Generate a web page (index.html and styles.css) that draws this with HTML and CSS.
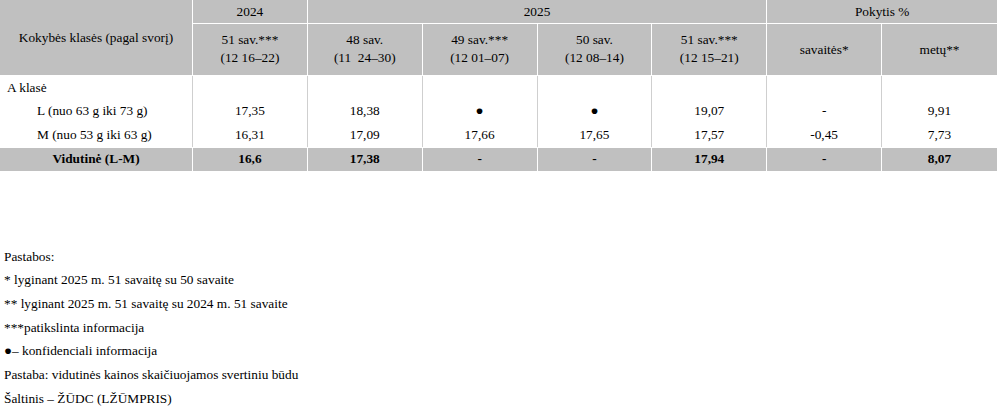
FILE: index.html
```html
<!DOCTYPE html>
<html lang="lt">
<head>
  <meta charset="UTF-8" />
  <title>Kiaušinių kainos</title>
  <link rel="stylesheet" href="styles.css">
</head>
<body>

  <table class="kainos">
    <colgroup>
      <col class="c-pav" />
      <col /><col /><col /><col /><col /><col /><col />
    </colgroup>
    <tr class="antraste">
      <th rowspan="2" class="pav">Kokybės klasės (pagal svorį)</th>
      <th class="metai">2024</th>
      <th colspan="4" class="metai">2025</th>
      <th colspan="2" class="metai">Pokytis %</th>
    </tr>
    <tr class="antraste">
      <th>51 sav.***<br />(12 16–22)</th>
      <th>48 sav.<br />(11&nbsp; 24–30)</th>
      <th>49 sav.***<br />(12 01–07)</th>
      <th>50 sav.<br />(12 08–14)</th>
      <th>51 sav.***<br />(12 15–21)</th>
      <th class="pokytis">savaitės*</th>
      <th class="pokytis">metų**</th>
    </tr>
    <tr class="duom">
      <td class="klase">A klasė</td>
      <td></td><td></td><td></td><td></td><td></td><td></td><td></td>
    </tr>
    <tr class="duom">
      <td class="klase sub">L (nuo 63 g iki 73 g)</td>
      <td>17,35</td>
      <td>18,38</td>
      <td>●</td>
      <td>●</td>
      <td>19,07</td>
      <td>-</td>
      <td>9,91</td>
    </tr>
    <tr class="duom">
      <td class="klase sub">M (nuo 53 g iki 63 g)</td>
      <td>16,31</td>
      <td>17,09</td>
      <td>17,66</td>
      <td>17,65</td>
      <td>17,57</td>
      <td>-0,45</td>
      <td>7,73</td>
    </tr>
    <tr class="vidurkis">
      <td>Vidutinė (L-M)</td>
      <td>16,6</td>
      <td>17,38</td>
      <td>-</td>
      <td>-</td>
      <td>17,94</td>
      <td>-</td>
      <td>8,07</td>
    </tr>
  </table>

  <!-- pastabos po lentele -->
  <div class="pastabos">
    <div>Pastabos:</div>
    <div>* lyginant 2025 m. 51 savaitę su 50 savaite</div>
    <div>** lyginant 2025 m. 51 savaitę su 2024 m. 51 savaite</div>
    <div>***patikslinta informacija</div>
    <div>●– konfidenciali informacija</div>
    <div>Pastaba: vidutinės kainos skaičiuojamos svertiniu būdu</div>
    <div>Šaltinis – ŽŪDC (LŽŪMPRIS)</div>
  </div>

</body>
</html>
```

FILE: styles.css
```css
:root {
  --pilka: #c0c0c0;
  --linija: #cfcfcf;
  --sriftas: "Liberation Serif", "Times New Roman", serif;
}
body {
  margin: 0;
  font-family: var(--sriftas);
  font-size: 13.33px;
  color: #000;
  background: #fff;
}
.kainos {
  width: 997px;
  table-layout: fixed;
  border-collapse: separate;
  border-spacing: 0;
  font-size: 13.33px;
}
.c-pav {
  width: 193px;
}
.kainos th,
.kainos td {
  padding: 0;
  text-align: center;
  font-weight: normal;
  font-family: var(--sriftas);
}
.antraste th {
  background: var(--pilka);
  border-right: 1px solid #fff;
  border-bottom: 1px solid #fff;
  line-height: 18px;
  height: 49px;
  padding-bottom: 2px;
}
.antraste th.metai {
  height: 23px;
  padding: 0;
}
.antraste th.pav {
  padding: 0;
}
.antraste th.pokytis {
  padding-bottom: 0;
}
.antraste th:last-child,
.duom td:last-child,
.vidurkis td:last-child {
  border-right: none;
}
.duom td {
  height: 23.5px;
  border-right: 1px solid var(--linija);
  line-height: 18px;
}
.duom td.klase {
  text-align: left;
  padding-left: 7px;
}
.duom td.sub {
  padding-left: 37px;
}
.vidurkis td {
  background: var(--pilka);
  border-top: 1px solid #fff;
  border-right: 1px solid #fff;
  height: 23px;
  font-weight: bold;
}
.pastabos {
  margin-top: 74px;
  padding-left: 4px;
  line-height: 23.67px;
}
```
